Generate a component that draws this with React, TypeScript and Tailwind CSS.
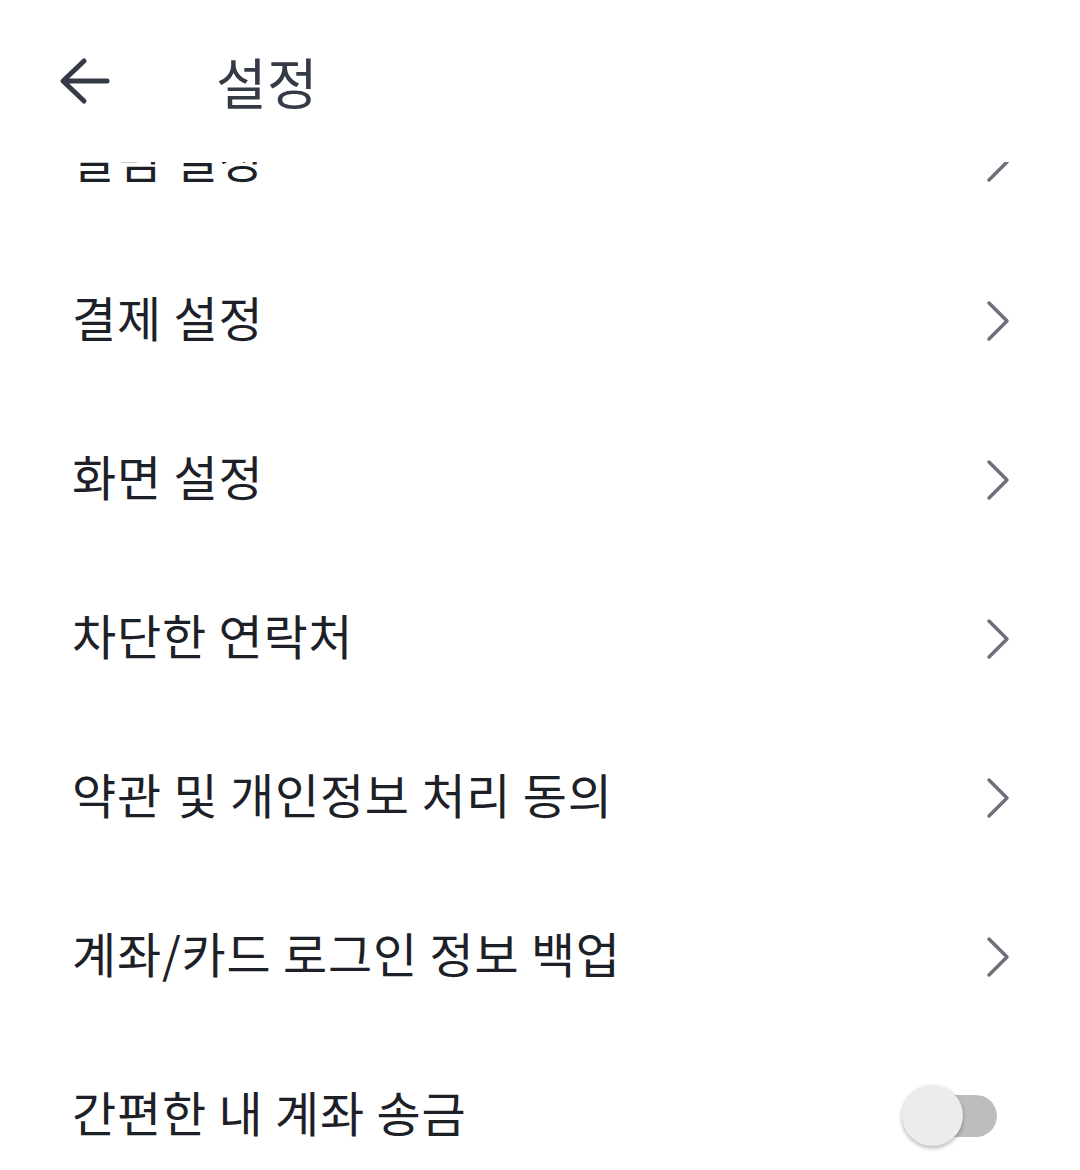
import React from "react";

const items = [
  "알림 설정",
  "결제 설정",
  "화면 설정",
  "차단한 연락처",
  "약관 및 개인정보 처리 동의",
  "계좌/카드 로그인 정보 백업",
];

function Chevron() {
  return (
    <svg width="24" height="42" viewBox="0 0 24 42" fill="none">
      <polyline
        points="3,3 21,21 3,39"
        stroke="#6b717b"
        strokeWidth="3.5"
        strokeLinecap="round"
        strokeLinejoin="round"
      />
    </svg>
  );
}

export default function App() {
  const font = { fontFamily: '"Noto Sans CJK KR", "Noto Sans", sans-serif' };
  return (
    <div className="w-[1080px] h-[1170px] bg-white overflow-hidden" style={font}>
      <div className="h-[162px] flex items-center relative z-10 bg-white">
        <div className="ml-[58px] w-[52px] flex items-center">
          <svg width="52" height="48" viewBox="0 0 52 48" fill="none">
            <path
              d="M49 24 H6 M26 4 L5 24 L26 44"
              stroke="#343a46"
              strokeWidth="5"
              strokeLinecap="round"
              strokeLinejoin="round"
            />
          </svg>
        </div>
        <div className="ml-[106px] text-[55px] leading-none text-[#343a46] pb-[2px] tracking-[0.5px]">설정</div>
      </div>
      <div className="h-[1008px] overflow-hidden">
        <div className="-mt-[80px]">
          {items.map((t) => (
            <div key={t} className="h-[159px] flex items-center justify-between pl-[72px] pr-[70px]">
              <span className="text-[48px] leading-none text-[#1d2127] tracking-[0.8px] pb-[9px]">{t}</span>
              <Chevron />
            </div>
          ))}
          <div className="h-[159px] flex items-center justify-between pl-[72px] pr-[83px]">
            <span className="text-[48px] leading-none text-[#1d2127] tracking-[0.8px] pb-[9px]">간편한 내 계좌 송금</span>
            <div className="relative w-[95px] h-[62px] flex items-center justify-end">
              <div className="w-[91px] h-[42px] rounded-full bg-[#bdbdbd]" />
              <div className="absolute left-0 top-0 w-[61px] h-[61px] rounded-full bg-[#ececec] shadow-[0_2px_4px_rgba(0,0,0,0.3)]" />
            </div>
          </div>
        </div>
      </div>
    </div>
  );
}
